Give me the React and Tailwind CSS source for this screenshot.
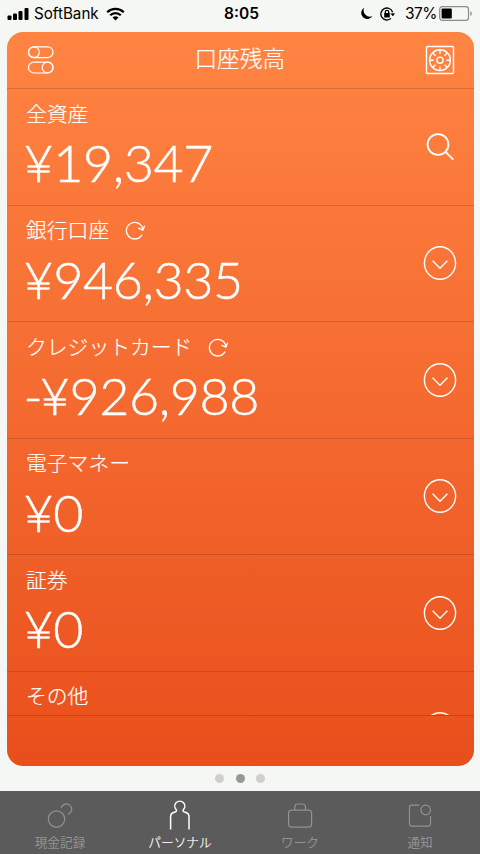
import React from 'react';

const accounts = [
  { name: '全資産', amount: '¥19,347', action: 'search' },
  { name: '銀行口座', amount: '¥946,335', refresh: true },
  { name: 'クレジットカード', amount: '-¥926,988', refresh: true },
  { name: '電子マネー', amount: '¥0' },
  { name: '証券', amount: '¥0' },
  { name: 'その他' },
];

const tabs = [
  { id: 'cash', label: '現金記録' },
  { id: 'personal', label: 'パーソナル', active: true },
  { id: 'work', label: 'ワーク' },
  { id: 'news', label: '通知' },
];

function StatusBar() {
  return (
    <div className="grid h-8 grid-cols-[1fr_auto_1fr] items-start px-[7px] pt-[3px] font-['Inter','Liberation_Sans',sans-serif] text-[15.5px] leading-5 text-black">
      <div className="flex items-center">
        <svg width="22" height="14" viewBox="0 0 22 14" fill="currentColor">
          <rect x="0.5" y="8.5" width="4" height="4.5" rx="1" />
          <rect x="6" y="6.5" width="4" height="6.5" rx="1" />
          <rect x="11.5" y="4" width="4" height="9" rx="1" />
          <rect x="17.5" y="1" width="4" height="12" rx="1" />
        </svg>
        <span className="ml-[5px] w-[65px] whitespace-nowrap pt-px text-[15.2px]">SoftBank</span>
        <svg className="ml-[7px]" width="19" height="14" viewBox="0 0 19 14" fill="none" stroke="currentColor" strokeWidth="2.3">
          <path d="M1.2 5.2a11.8 11.8 0 0 1 16.6 0" />
          <path d="M4.2 8.3a7.5 7.5 0 0 1 10.6 0" />
          <path d="M9.5 13.6 6.5 10.6a4.3 4.3 0 0 1 6 0z" fill="currentColor" stroke="none" />
        </svg>
      </div>
      <span className="pl-[3px] pt-px text-[15.5px] font-semibold">8:05</span>
      <div className="flex items-center justify-end">
        <svg width="13" height="13" viewBox="0 0 13 13" fill="currentColor">
          <path d="M4.2.8A6 6 0 1 0 12.4 9 6.2 6.2 0 0 1 4.2.8z" />
        </svg>
        <svg className="ml-[7px]" width="16" height="14" viewBox="0 0 16 14" fill="none" stroke="currentColor" strokeWidth="1.3">
          <path d="M12.6 5.2A6 6 0 1 0 11 11.4M12.8 6.5a6 6 0 0 1-.1 2" />
          <path d="M10.2 6.4h5L12.8 9z" fill="currentColor" stroke="none" />
          <rect x="4.2" y="6" width="5.6" height="4.4" rx=".5" fill="currentColor" stroke="none" />
          <path d="M5.3 6.5V5a1.7 1.7 0 0 1 3.4 0v1.5" />
        </svg>
        <span className="ml-[9px] w-[31px] whitespace-nowrap pt-px text-[15.5px] tracking-[-0.6px]">37%</span>
        <svg className="ml-[3px]" width="34" height="15" viewBox="0 0 34 15" fill="none">
          <rect x="0.7" y="0.7" width="28.8" height="13.6" rx="2.6" stroke="#8b8b8b" strokeWidth="1.2" />
          <rect x="2.6" y="2.5" width="10.2" height="10" rx="1" fill="#000" />
          <path d="M31.3 5.2c2 .7 2 3.9 0 4.6z" fill="#8b8b8b" />
        </svg>
      </div>
    </div>
  );
}

function SwitchesIcon() {
  return (
    <svg width="28" height="30" viewBox="0 0 28 30" fill="none" stroke="currentColor" strokeWidth="1.2">
      <rect x="1.5" y="1.8" width="24.5" height="10.8" rx="5.4" />
      <circle cx="6.9" cy="7.2" r="5.4" />
      <rect x="1.5" y="17.2" width="24.5" height="10.8" rx="5.4" />
      <circle cx="20.6" cy="22.6" r="5.4" />
    </svg>
  );
}

function SafeIcon() {
  return (
    <svg width="30" height="30" viewBox="0 0 30 30" fill="none" stroke="currentColor" strokeWidth="1.4">
      <rect x="1.5" y="1.5" width="27" height="27" rx="1" />
      <circle cx="15" cy="15.2" r="10.4" />
      <circle cx="15" cy="15.2" r="3.1" />
      {[0, 45, 90, 135, 180, 225, 270, 315].map((deg) => (
        <path key={deg} d="M15 4.8v4" transform={`rotate(${deg} 15 15.2)`} />
      ))}
    </svg>
  );
}

function RefreshIcon() {
  return (
    <svg className="ml-4" width="21" height="20" viewBox="0 0 21 20" fill="none" stroke="currentColor" strokeWidth="1.3">
      <path d="M17 14.6A8.3 8.3 0 1 1 17.9 9.6" />
      <path d="M13.2 8.1l4.7 2 1.8-4.4" />
    </svg>
  );
}

function SearchIcon() {
  return (
    <svg width="34" height="34" viewBox="0 0 34 34" fill="none" stroke="currentColor" strokeWidth="1.9">
      <circle cx="15" cy="14.5" r="10.4" />
      <path d="M22.5 21.9l7.8 7.8" />
    </svg>
  );
}

function ExpandIcon() {
  return (
    <svg width="34" height="36" viewBox="0 0 34 36" fill="none" stroke="currentColor" strokeWidth="1.4">
      <ellipse cx="17" cy="18" rx="15.6" ry="16.3" />
      <path d="M9.6 15.8l7.4 7.5 7.4-7.5" />
    </svg>
  );
}

function AccountRow({ account }) {
  return (
    <div className="flex h-[116.5px] shrink-0 justify-between border-t border-black/15 pl-[19.5px] pr-[17px]">
      <div>
        <div className="flex h-[49px] items-center text-[20.8px] font-light [-webkit-text-stroke:0.2px]">
          <span>{account.name}</span>
          {account.refresh && <RefreshIcon />}
        </div>
        {account.amount && (
          <div className="-ml-[2.5px] whitespace-nowrap font-['Lato',sans-serif] text-[52px] font-light leading-[49px] tracking-[-0.4px] [-webkit-text-stroke:0.5px]">
            {account.amount.startsWith('-') && <span className="tracking-[-3px]">-</span>}
            {account.amount.replace('-', '')}
          </div>
        )}
      </div>
      <div className="self-center">
        {account.action === 'search' ? <SearchIcon /> : <ExpandIcon />}
      </div>
    </div>
  );
}

function TabIcon({ id }) {
  return (
    <svg width="30" height="30" viewBox="0 0 30 30" fill="none" stroke="currentColor" strokeWidth="1.2">
      {id === 'cash' && (
        <>
          <circle cx="11.5" cy="19" r="8.2" />
          <path d="M16.1 7.8a5.4 5.4 0 1 1 7 6.6" />
        </>
      )}
      {id === 'personal' && (
        <path
          strokeWidth="1.5"
          d="M5.6 29.5V16.5q0-3.2 3-4l2.2-.8q1.3-.7.3-2.2a5 5 0 1 1 7.4 0q-1 1.5.3 2.2l2.2.8q3 .8 3 4v13"
        />
      )}
      {id === 'work' && (
        <>
          <rect x="3.6" y="10.2" width="23" height="17" rx="3" />
          <path d="M9.8 10.2V7q0-3 3-3h4.6q3 0 3 3v3.2" />
        </>
      )}
      {id === 'news' && (
        <>
          <path d="M14.5 5.1H7q-2.5 0-2.5 2.5v16q0 2.5 2.5 2.5h16q2.5 0 2.5-2.5v-7.5" />
          <circle cx="20.7" cy="10" r="4.8" />
        </>
      )}
    </svg>
  );
}

export default function App() {
  return (
    <div className="flex h-[854px] w-[480px] flex-col overflow-hidden bg-[#f5f7f4] font-['Noto_Sans_CJK_JP',sans-serif]">
      <StatusBar />

      <main className="mx-[6.5px] flex h-[734px] flex-col overflow-hidden rounded-2xl bg-linear-to-b from-[#ff8442] to-[#e94e1b] text-white">
        <header className="flex h-14 shrink-0 items-center justify-between pl-5 pr-[18.5px]">
          <SwitchesIcon />
          <h1 className="pb-[3px] text-[22.7px] font-light [-webkit-text-stroke:0.2px]">口座残高</h1>
          <SafeIcon />
        </header>

        {/* scrolling account list */}
        <div className="flex h-[627px] shrink-0 flex-col overflow-hidden">
          {accounts.map((account) => (
            <AccountRow key={account.name} account={account} />
          ))}
        </div>
        <div className="flex-1 border-t border-black/15" />
      </main>

      {/* page dots */}
      <div className="flex h-[25px] items-center justify-center gap-[11.5px]">
        <span className="size-[9px] rounded-full bg-[#d0cfce]" />
        <span className="size-[9px] rounded-full bg-[#979797]" />
        <span className="size-[9px] rounded-full bg-[#d0cfce]" />
      </div>

      <nav className="grid h-[63px] grid-cols-4 bg-[#5b5b5b]">
        {tabs.map((tab) => (
          <button
            key={tab.id}
            className={`flex flex-col items-center pt-[9px] text-[12.7px] leading-6 ${tab.active ? 'font-light text-white [-webkit-text-stroke:0.2px]' : 'text-[#929292]'}`}
          >
            <TabIcon id={tab.id} />
            <span>{tab.label}</span>
          </button>
        ))}
      </nav>
    </div>
  );
}
